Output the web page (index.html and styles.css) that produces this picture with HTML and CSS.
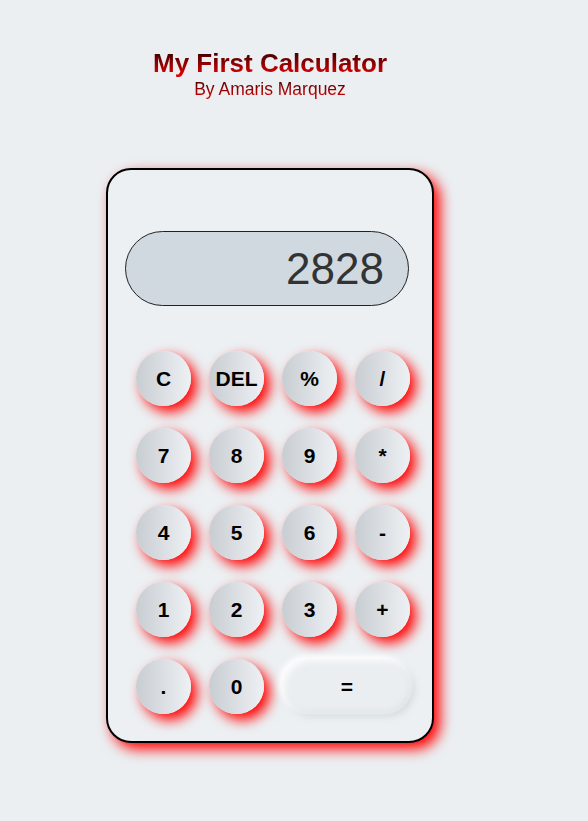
FILE: index.html
```html
<!DOCTYPE html>
<html>
<head>
<meta charset="utf-8">
<link rel="stylesheet" href="styles.css">
</head>
<body>
<div class="page">
  <header class="header">
    <h1 class="title">My First Calculator</h1>
    <p class="subtitle">By Amaris Marquez</p>
  </header>
  <div class="calc">
    <div class="display">2828</div>
    <div class="keys">
      <button class="key">C</button>
      <button class="key">DEL</button>
      <button class="key">%</button>
      <button class="key">/</button>
      <button class="key">7</button>
      <button class="key">8</button>
      <button class="key">9</button>
      <button class="key">*</button>
      <button class="key">4</button>
      <button class="key">5</button>
      <button class="key">6</button>
      <button class="key">-</button>
      <button class="key">1</button>
      <button class="key">2</button>
      <button class="key">3</button>
      <button class="key">+</button>
      <button class="key">.</button>
      <button class="key">0</button>
      <button class="key equals">=</button>
    </div>
  </div>
</div>
</body>
</html>
```

FILE: styles.css
```css
html, body {
  background: #ebeff2;
}
body {
  margin: 8px;
  font-family: "Liberation Sans", Arial, sans-serif;
}
.page {
  width: 524px;
  display: flex;
  flex-direction: column;
  align-items: center;
  padding-bottom: 40px;
}
.header {
  text-align: center;
  padding-top: 40px;
}
.title {
  margin: 0;
  font-size: 26px;
  font-weight: bold;
  line-height: 30px;
  background: linear-gradient(#4a0000 20%, #d80000 85%);
  -webkit-background-clip: text;
  background-clip: text;
  color: transparent;
}
.subtitle {
  margin: 0;
  font-size: 17.5px;
  line-height: 22px;
  background: linear-gradient(#5a0000 20%, #d00000 85%);
  -webkit-background-clip: text;
  background-clip: text;
  color: transparent;
}
.calc {
  margin-top: 68px;
  width: 324px;
  height: 571px;
  border: 2px solid #000;
  border-radius: 25px;
  background: #ecf0f3;
  box-shadow: 6px 6px 14px #ff0000;
  display: flex;
  flex-direction: column;
  box-sizing: content-box;
}
.display {
  margin: 61px 0 0 17px;
  width: 284px;
  height: 75px;
  box-sizing: border-box;
  border: 1px solid #222;
  border-radius: 38px;
  background: #d1d9e0;
  color: #333;
  font-size: 44px;
  line-height: 73px;
  text-align: right;
  padding-right: 24px;
}
.keys {
  margin: 45px 0 0 28px;
  display: grid;
  grid-template-columns: repeat(4, 55px);
  grid-auto-rows: 55px;
  column-gap: 18px;
  row-gap: 22px;
}
.key {
  border: none;
  padding: 0;
  border-radius: 50%;
  background: linear-gradient(to right, #c8cdd2, #eef1f4);
  box-shadow: 6px 6px 13px #ff0000;
  font-family: "Liberation Sans", Arial, sans-serif;
  font-weight: bold;
  font-size: 21px;
  color: #000;
}
.equals {
  grid-column: span 2;
  border-radius: 28px;
  background: #ebeef1;
  box-shadow: -3px -3px 6px #ffffff, 3px 3px 6px rgba(200, 206, 212, 0.6), inset 2px 2px 6px rgba(255,255,255,0.9), inset -2px -2px 6px rgba(210,215,220,0.6);
  width: 130px;
}
```
